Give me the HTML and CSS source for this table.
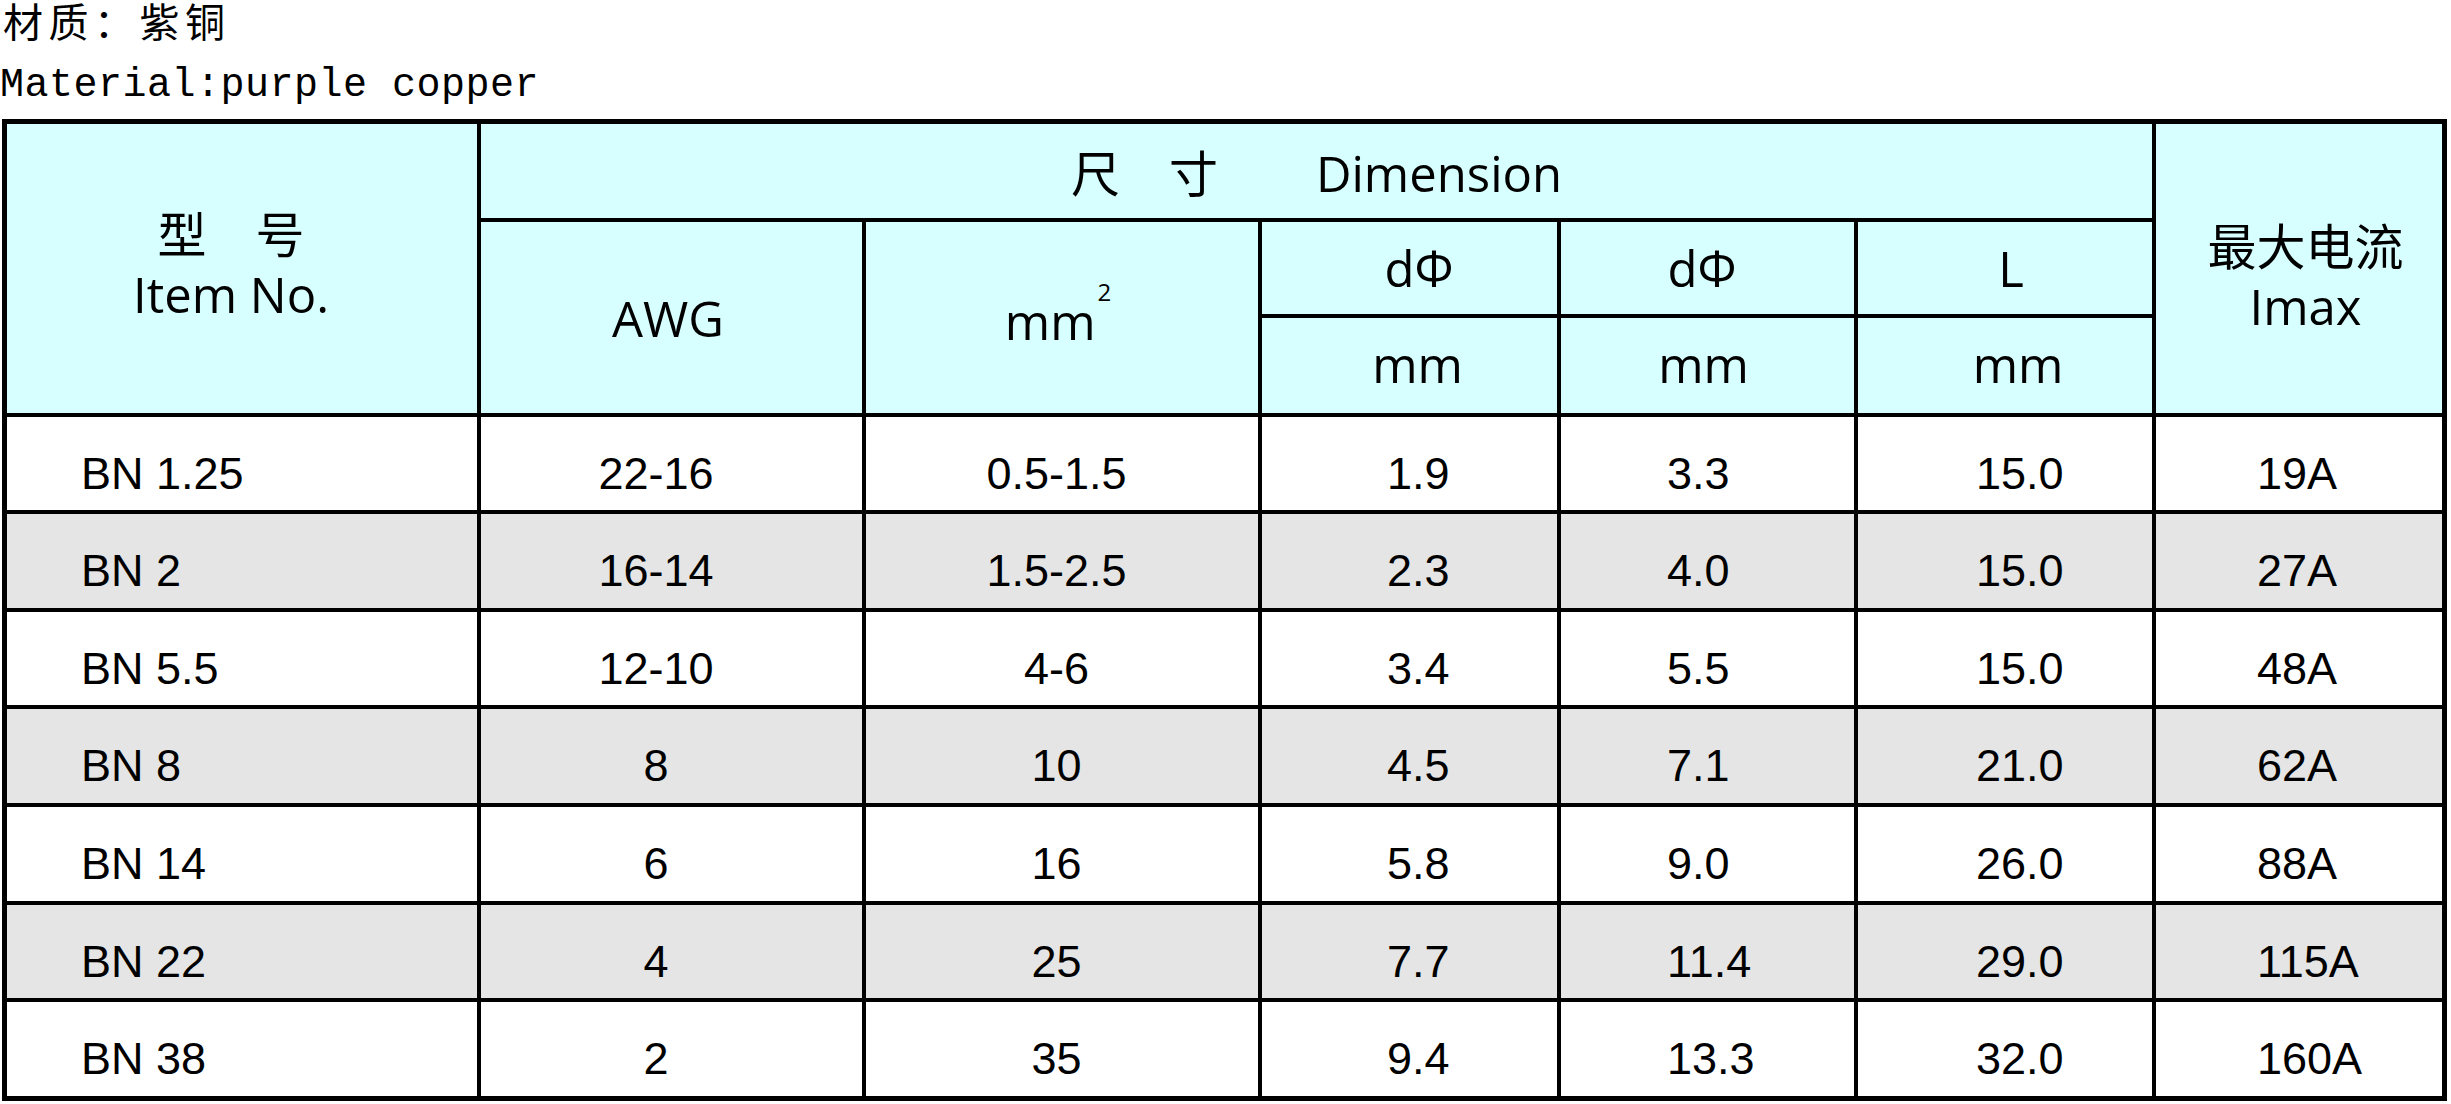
FILE: index.html
```html
<!DOCTYPE html>
<html lang="zh">
<head>
<meta charset="utf-8">
<title>BN 规格表</title>
<link rel="stylesheet" href="styles.css">
</head>
<body>
  <div class="mat-cn">材质：紫铜</div>
  <div class="mat-en">Material:purple copper</div>
  <div class="spec">
    <div class="cell head h-item"><span>型　号</span><span>Item No.</span></div>
    <div class="cell head h-dim">尺　寸　　Dimension</div>
    <div class="cell head h-imax"><span>最大电流</span><span>Imax</span></div>
    <div class="cell head h-awg">AWG</div>
    <div class="cell head h-mm2"><span>mm<sup class="sq">2</sup></span></div>
    <div class="cell head h-d1">dΦ</div>
    <div class="cell head h-d2">dΦ</div>
    <div class="cell head h-l">L</div>
    <div class="cell head h-u1">mm</div>
    <div class="cell head h-u2">mm</div>
    <div class="cell head h-u3">mm</div>

    <div class="row">
      <div class="cell">BN 1.25</div><div class="cell">22-16</div><div class="cell">0.5-1.5</div><div class="cell">1.9</div><div class="cell">3.3</div><div class="cell">15.0</div><div class="cell">19A</div>
    </div>
    <div class="row alt">
      <div class="cell">BN 2</div><div class="cell">16-14</div><div class="cell">1.5-2.5</div><div class="cell">2.3</div><div class="cell">4.0</div><div class="cell">15.0</div><div class="cell">27A</div>
    </div>
    <div class="row">
      <div class="cell">BN 5.5</div><div class="cell">12-10</div><div class="cell">4-6</div><div class="cell">3.4</div><div class="cell">5.5</div><div class="cell">15.0</div><div class="cell">48A</div>
    </div>
    <div class="row alt">
      <div class="cell">BN 8</div><div class="cell">8</div><div class="cell">10</div><div class="cell">4.5</div><div class="cell">7.1</div><div class="cell">21.0</div><div class="cell">62A</div>
    </div>
    <div class="row">
      <div class="cell">BN 14</div><div class="cell">6</div><div class="cell">16</div><div class="cell">5.8</div><div class="cell">9.0</div><div class="cell">26.0</div><div class="cell">88A</div>
    </div>
    <div class="row alt">
      <div class="cell">BN 22</div><div class="cell">4</div><div class="cell">25</div><div class="cell">7.7</div><div class="cell">11.4</div><div class="cell">29.0</div><div class="cell">115A</div>
    </div>
    <div class="row">
      <div class="cell">BN 38</div><div class="cell">2</div><div class="cell">35</div><div class="cell">9.4</div><div class="cell">13.3</div><div class="cell">32.0</div><div class="cell">160A</div>
    </div>
  </div>
</body>
</html>
```
FILE: styles.css
```css
* { box-sizing: border-box; }
html, body { margin: 0; padding: 0; background: #fff; }
body { width: 2451px; height: 1104px; overflow: hidden; color: #000; }

.mat-cn {
  font-family: "Liberation Serif", "Noto Sans CJK SC", sans-serif;
  font-size: 40px;
  line-height: 40px;
  letter-spacing: 5.5px;
  padding: 4px 0 0 3px;
}
.mat-en {
  font-family: "Liberation Mono", monospace;
  font-size: 40px;
  line-height: 40px;
  letter-spacing: 0.5px;
  margin-top: 22px;
}

.spec {
  margin: 13px 0 0 2px;
  width: 2445px;
  display: grid;
  grid-template-columns: 470px 381px 392px 295px 293px 294px 286px;
  grid-template-rows: 94px 92px 95px 93px 94px 93px 94px 94px 93px 94px;
  gap: 4px;
  padding: 5px;
  background: #000;
}

.head {
  background: #d7ffff;
  font-family: "Open Sans", "Noto Sans CJK SC", sans-serif;
  font-size: 49px;
  line-height: 58px;
  display: flex;
  flex-direction: column;
  align-items: center;
  justify-content: center;
  white-space: nowrap;
}
.h-item { grid-column: 1; grid-row: 1 / span 3; line-height: 60px; padding-right: 22px; padding-bottom: 9px; }
.h-dim { grid-column: 2 / span 5; grid-row: 1; padding-top: 4px; }
.h-imax { grid-column: 7; grid-row: 1 / span 3; line-height: 60px; padding-top: 15px; padding-left: 13px; }
.h-awg { grid-column: 2; grid-row: 2 / span 2; padding-right: 7px; }
.h-mm2 { grid-column: 3; grid-row: 2 / span 2; padding-top: 7px; padding-right: 8px; }
.h-d1 { grid-column: 4; grid-row: 2; padding-left: 19px; }
.h-d2 { grid-column: 5; grid-row: 2; padding-right: 11px; }
.h-l { grid-column: 6; grid-row: 2; padding-left: 12px; }
.h-u1 { grid-column: 4; grid-row: 3; padding-left: 16px; padding-bottom: 4px; }
.h-u2 { grid-column: 5; grid-row: 3; padding-right: 8px; padding-bottom: 4px; }
.h-u3 { grid-column: 6; grid-row: 3; padding-left: 26px; padding-bottom: 4px; }

.sq {
  font-size: 24px;
  line-height: 0;
  vertical-align: 39px;
  margin-left: 2px;
}

.row { display: contents; }
.row > .cell {
  background: #fff;
  font-family: "Liberation Sans", Arial, sans-serif;
  font-size: 45px;
  line-height: 50px;
  display: flex;
  align-items: center;
  padding-top: 20px;
  white-space: nowrap;
}
.row.alt > .cell { background: #e5e5e5; }

.row > .cell:nth-child(1) { padding-left: 74px; }
.row > .cell:nth-child(2) { justify-content: center; padding-right: 31px; }
.row > .cell:nth-child(3) { justify-content: center; padding-right: 11px; }
.row > .cell:nth-child(4) { padding-left: 125px; }
.row > .cell:nth-child(5) { padding-left: 106px; }
.row > .cell:nth-child(6) { padding-left: 118px; }
.row > .cell:nth-child(7) { padding-left: 101px; }
```
